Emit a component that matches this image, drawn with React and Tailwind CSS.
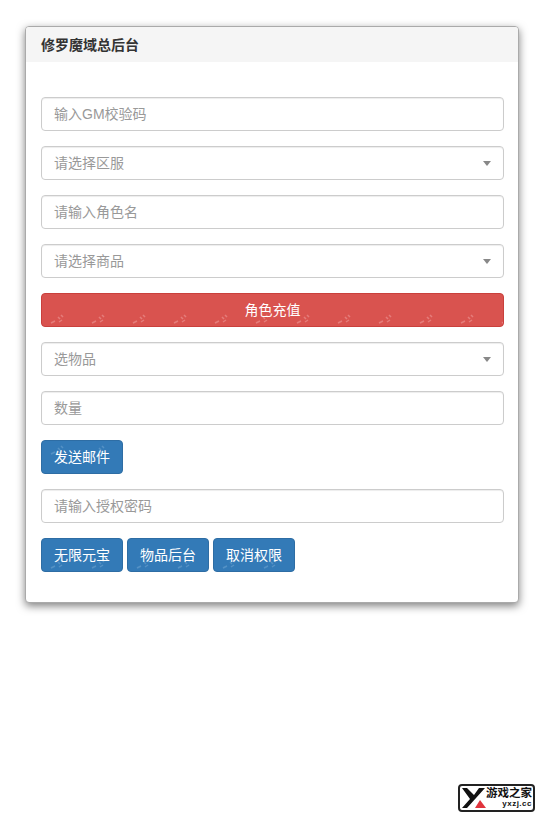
const FONT = "font-['Liberation_Sans','Noto_Sans_CJK_SC',sans-serif]";

function Marks({ id, color = "#ffffff", dy = 0, dx = 0 }) {
  // faint repeated watermark on the coloured buttons
  return (
    <svg className="absolute inset-0 w-full h-full pointer-events-none" aria-hidden="true">
      <defs>
        <pattern id={id} width="41" height="34" patternUnits="userSpaceOnUse" patternTransform={`translate(${dx} ${dy})`}>
          <path d="M9 29l4-2M16 23l2 2M19 21l2 2M17 28l3-2" stroke={color} strokeOpacity="0.55" strokeWidth="1.5" fill="none" />
        </pattern>
      </defs>
      <rect width="100%" height="100%" fill={`url(#${id})`} />
    </svg>
  );
}

function TextInput({ placeholder }) {
  return (
    <input
      placeholder={placeholder}
      className="block w-full h-[34px] px-3 rounded border border-[#ccc] bg-white text-sm text-[#555] placeholder:text-[#999] outline-none shadow-[inset_0_1px_1px_rgba(0,0,0,0.075)]"
    />
  );
}

function SelectBox({ placeholder }) {
  return (
    <div className="relative">
      <select
        defaultValue=""
        className="block w-full h-[34px] px-3 rounded border border-[#ccc] bg-white text-sm text-[#999] outline-none appearance-none shadow-[inset_0_1px_1px_rgba(0,0,0,0.075)]"
      >
        <option value="">{placeholder}</option>
      </select>
      <span className="absolute right-[13px] top-[15px] w-0 h-0 border-x-[4px] border-x-transparent border-t-[5px] border-t-[#888]" />
    </div>
  );
}

function BlueButton({ id, dy, children }) {
  return (
    <button className="relative overflow-hidden h-[34px] w-[82px] rounded border border-[#2e6da4] bg-[#337ab7] text-sm text-white">
      <Marks id={id} color="#6fa3d0" dy={dy} />
      <span className="relative">{children}</span>
    </button>
  );
}

function Logo() {
  return (
    <div className="absolute left-[458px] top-[784px] w-[77px] h-[28px] rounded-[4px] bg-white border-2 border-[#222] flex items-center overflow-hidden">
      <svg width="24" height="20" viewBox="0 0 24 20" className="shrink-0 ml-[2px]">
        <path d="M0 0h5l7 7 5-7h6L5 20H0l8-9z" fill="#111" />
        <path d="M13 20l5-8 6 8z" fill="#e0343c" />
      </svg>
      <div className="flex flex-col items-end leading-none">
        <span className="text-[11.5px] font-bold text-[#111] whitespace-nowrap">游戏之家</span>
        <span className="text-[8px] font-bold text-[#111] mt-[1px] tracking-[0.5px]">yxzj.cc</span>
      </div>
    </div>
  );
}

export default function App() {
  return (
    <div className={`relative w-[545px] h-[822px] bg-white overflow-hidden pt-[26px] pl-[25px] ${FONT}`}>
      <section className="w-[494px] h-[577px] rounded border border-[#aaa] bg-white shadow-[0_3px_9px_rgba(0,0,0,0.5)] overflow-hidden">
        <div className="h-[35px] px-[15px] flex items-center bg-[#f5f5f5]">
          <h3 className="text-sm font-bold text-[#333]">修罗魔域总后台</h3>
        </div>
        <div className="pl-[15px] pr-[14px] pt-[35px] flex flex-col gap-[15px]">
          <TextInput placeholder="输入GM校验码" />
          <SelectBox placeholder="请选择区服" />
          <TextInput placeholder="请输入角色名" />
          <SelectBox placeholder="请选择商品" />
          <button className="relative overflow-hidden h-[34px] w-full rounded border border-[#c9403c] bg-[#d9534f] text-sm text-white">
            <Marks id="mark-red" color="#ef9f9c" />
            <span className="relative">角色充值</span>
          </button>
          <SelectBox placeholder="选物品" />
          <TextInput placeholder="数量" />
          <div className="flex">
            <BlueButton id="mark-mail" dy={-16}>发送邮件</BlueButton>
          </div>
          <TextInput placeholder="请输入授权密码" />
          <div className="flex gap-1">
            <BlueButton id="mark-a" dy={0}>无限元宝</BlueButton>
            <BlueButton id="mark-b" dy={0}>物品后台</BlueButton>
            <BlueButton id="mark-c" dy={0}>取消权限</BlueButton>
          </div>
        </div>
      </section>
      <Logo />
    </div>
  );
}
